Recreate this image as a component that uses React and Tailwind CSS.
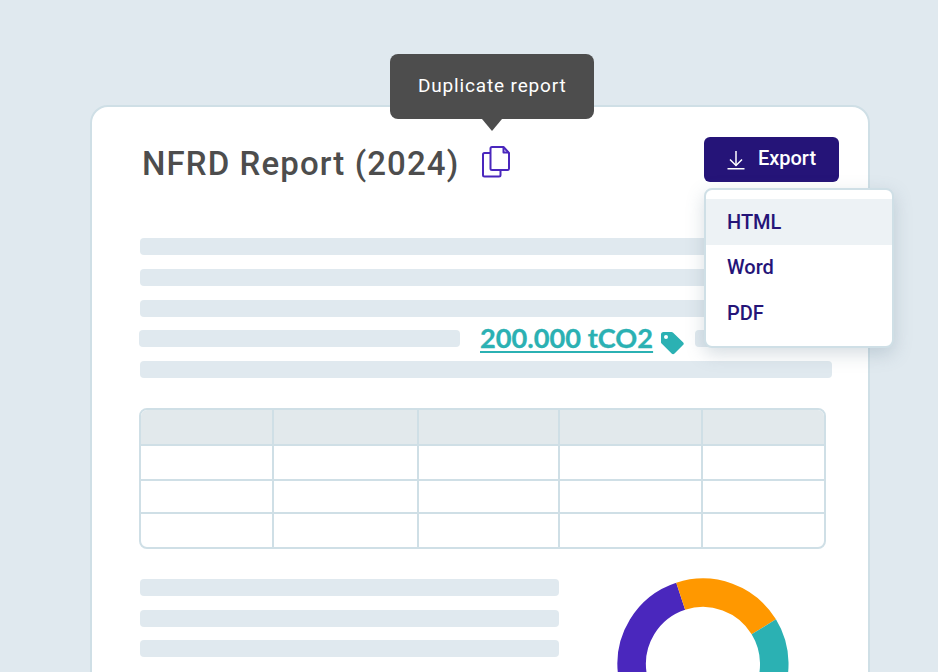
const Line = ({ className = "" }) => <div className={`h-[17px] rounded bg-[#e0e9ef] ${className}`} />;

function CopyIcon() {
  return (
    <svg width="28" height="32" viewBox="0 0 28 32" fill="none" stroke="#4a27bd" strokeWidth="2" strokeLinejoin="round">
      <path d="M10.5 1H21.5L27 7V22.5a1.5 1.5 0 0 1-1.5 1.5H10a1.5 1.5 0 0 1-1.5-1.5V2.5A1.5 1.5 0 0 1 10 1z" />
      <path d="M21.5 1V6.5H27" />
      <path d="M8.5 7H2.5A1.5 1.5 0 0 0 1 8.5V29A1.5 1.5 0 0 0 2.5 30.5H17A1.5 1.5 0 0 0 18.5 29V24" />
    </svg>
  );
}

function ExportIcon() {
  return (
    <svg width="18" height="20" viewBox="0 0 18 20" fill="none" stroke="white" strokeWidth="1.5">
      <path d="M9 1V15.5" />
      <path d="M3 9.5L9 15.5L15 9.5" />
      <path d="M0.5 18.75H17.5" />
    </svg>
  );
}

function TagIcon() {
  return (
    <svg width="24" height="24" viewBox="0 0 24 24">
      <path fill="#2bb1b3" d="M1 3.5A2.5 2.5 0 0 1 3.5 1H11.5a2 2 0 0 1 1.4.6L23 11.2a2 2 0 0 1 0 2.9L14.5 22.6a2 2 0 0 1-2.9 0L1.6 12.6A2 2 0 0 1 1 11.2zM6 8a2 2 0 1 0 0-4 2 2 0 0 0 0 4z" fillRule="evenodd" />
    </svg>
  );
}

function Tooltip() {
  return (
    <div className="absolute left-[-92px] top-[-92px] w-[204px] h-[65px] rounded-lg bg-[#4d4d4d] flex items-center justify-center text-white text-[19px] tracking-[0.85px]">
      Duplicate report
      <div className="absolute left-1/2 -translate-x-1/2 top-full w-0 h-0 border-x-[10px] border-x-transparent border-t-[12px] border-t-[#4d4d4d]" />
    </div>
  );
}

function ExportMenu() {
  return (
    <div className="absolute left-0 top-[51px] w-[190px] h-[160px] rounded-lg border-2 border-[#cfdfe6] bg-white pt-[9px] shadow-[0_6px_18px_rgba(90,120,140,0.25)] text-[#251478] text-[20px] font-medium">
      <div className="h-[45.5px] flex items-center pl-[21px] bg-[#edf2f5]">HTML</div>
      <div className="h-[45.5px] flex items-center pl-[21px]">Word</div>
      <div className="h-[45.5px] flex items-center pl-[21px]">PDF</div>
    </div>
  );
}

const cols = [0, 1, 2, 3, 4];

function Row({ className = "" }) {
  return (
    <div className={`grid grid-cols-[131px_145px_141px_143px_1fr] ${className}`}>
      {cols.map((c) => (
        <div key={c} className={c > 0 ? "border-l-2 border-[#cfdfe6]" : ""} />
      ))}
    </div>
  );
}

function Donut() {
  return (
    <svg width="172" height="172" viewBox="0 0 172 172" fill="none" strokeWidth="28.5" className="shrink-0">
      <path stroke="#4a27bd" d="M86 157.25A71.25 71.25 0 0 1 63.7 18.3" />
      <path stroke="#ff9800" d="M63.7 18.3A71.25 71.25 0 0 1 146.8 48.8" />
      <path stroke="#2bb1b3" d="M146.8 48.8A71.25 71.25 0 0 1 86 157.25" />
    </svg>
  );
}

export default function App() {
  return (
    <div className="h-[672px] overflow-hidden bg-[#e0e9ef] pt-[105px] pl-[90px] pr-[68px] font-['Roboto',sans-serif]">
      <div className="h-[700px] rounded-[18px] border-2 border-[#cfdfe6] bg-white pt-[30px] pl-[48px] pr-[29px]">
        <div className="flex items-center justify-between h-[45px]">
          <div className="flex items-center">
            <h1 className="ml-[2px] mt-[8px] text-[33px] font-medium tracking-[1.1px] text-[#4d4d4d] leading-none">NFRD Report (2024)</h1>
            <div className="relative ml-[23px] mt-[4px] flex">
              <Tooltip />
              <CopyIcon />
            </div>
          </div>
          <div className="relative">
            <button className="w-[135px] h-[45px] rounded-md bg-[#251478] text-white text-[20px] font-medium flex items-center justify-center gap-[13px]">
              <ExportIcon />
              <span className="mb-[3px]">Export</span>
            </button>
            <ExportMenu />
          </div>
        </div>

        <div className="mt-[56px] w-[692px] flex flex-col gap-[13.75px]">
          <Line />
          <Line />
          <Line />
          <div className="flex items-center h-[17px]">
            <Line className="w-[321px] ml-[-1px] shrink-0" />
            <span className="ml-[20px] mt-[-2px] font-['Lato',sans-serif] font-bold [-webkit-text-stroke:0.3px_#2bb1b3] text-[27.2px] leading-none text-[#2bb1b3] underline underline-offset-[3px] decoration-2">200.000 tCO2</span>
            <span className="ml-[7px] mt-[9px] flex"><TagIcon /></span>
            <Line className="ml-[11px] flex-1" />
          </div>
          <Line />
        </div>

        <div className="mt-[30px] ml-[-1px] w-[687px] h-[141px] rounded-lg border-2 border-[#cfdfe6] overflow-hidden flex flex-col">
          <Row className="h-[36px] bg-[#e2e9ec] border-b-2 border-[#cfdfe6]" />
          <Row className="h-[35px] border-b-2 border-[#cfdfe6]" />
          <Row className="h-[32.5px] border-b-2 border-[#cfdfe6]" />
          <Row className="flex-1" />
        </div>

        <div className="mt-[30px] flex items-start">
          <div className="w-[419px] flex flex-col gap-[13.5px] shrink-0">
            <Line />
            <Line />
            <Line />
          </div>
          <div className="ml-[58px] mt-[-1px]">
            <Donut />
          </div>
        </div>
      </div>
    </div>
  );
}
